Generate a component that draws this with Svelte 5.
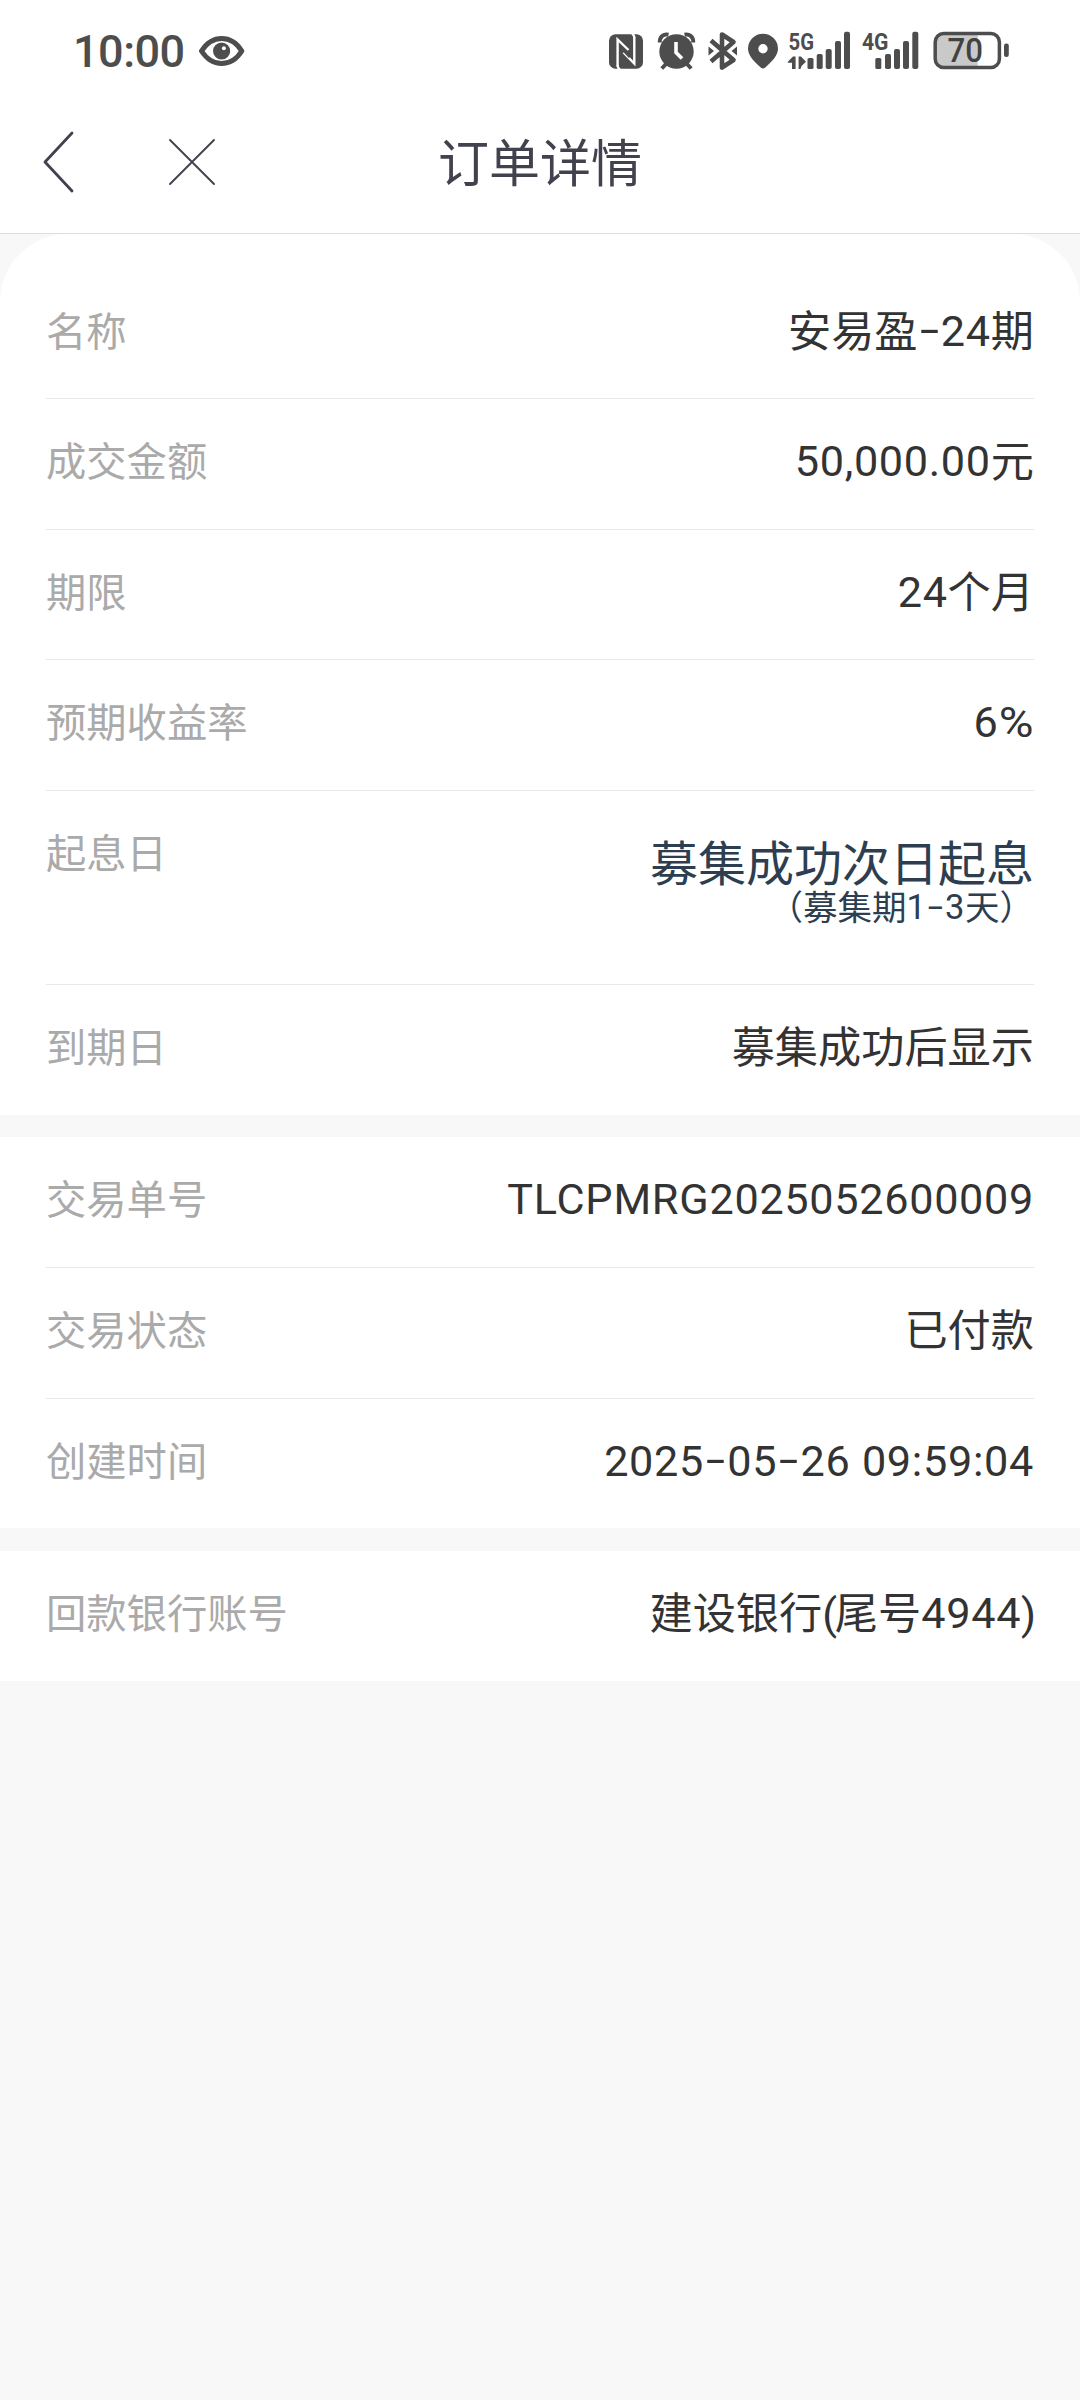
<script>
  const groups = [
    [
      { label: '名称', value: '安易盈-24期' },
      { label: '成交金额', value: '50,000.00元' },
      { label: '期限', value: '24个月' },
      { label: '预期收益率', value: '6%' },
      { label: '起息日', value: '募集成功次日起息', note: '（募集期1-3天）' },
      { label: '到期日', value: '募集成功后显示' }
    ],
    [
      { label: '交易单号', value: 'TLCPMRG2025052600009' },
      { label: '交易状态', value: '已付款' },
      { label: '创建时间', value: '2025-05-26 09:59:04' }
    ],
    [{ label: '回款银行账号', value: '建设银行(尾号4944)' }]
  ];

  const kinds = [
    [/^-/, 'dash'],
    [/^%/, 'pct'],
    [/^[()]/, 'paren'],
    [/^[A-Z]/, 'caps'],
    [/^[0-9.,: ]/, 'num']
  ];

  // Splits a string into runs of one kind of character, each with its own tracking.
  function runs(text) {
    return (text.match(/[-%()]|[A-Z]+|[0-9.,: ]+|[^-A-Z0-9.,:%() ]+/g) ?? []).map((t) => ({
      t,
      kind: kinds.find(([re]) => re.test(t))?.[1] ?? 'han'
    }));
  }
</script>

{#snippet rich(text)}{#each runs(text) as r}<span class={r.kind}>{r.t}</span>{/each}{/snippet}

<div class="screen">
  <div class="status">
    <div class="clock">
      <span class="time">10:00</span>
      <svg width="46" height="32" viewBox="199 36 46 32">
        <path d="M201.500 52C207 43.500 213.500 39.500 221.600 39.500S236.500 43.500 241.800 52C236.500 60.500 229.700 64.500 221.600 64.500S207 60.500 201.500 52Z" fill="none" stroke="#4d4d4d" stroke-width="5" stroke-linejoin="round" />
        <circle cx="221.600" cy="52" r="8.600" fill="#4d4d4d" />
        <circle cx="223.900" cy="49.300" r="2" fill="#fff" />
      </svg>
    </div>
    <div class="icons">
      <svg width="46" height="60" viewBox="604 21 46 60">
        <rect x="609" y="34.300" width="34" height="34.400" rx="6.500" fill="#4d4d4d" />
        <path d="M617.600 66.500V39.500L628.500 50M634.300 36.500V63.500L623.500 52.500" fill="none" stroke="#fff" stroke-width="2.400" />
        <path d="M632 33.500Q634.300 35 634.300 38M620 69.500Q617.600 68 617.600 65" fill="none" stroke="#fff" stroke-width="2.200" />
        <path d="M622.600 49L630 57" stroke="#4d4d4d" stroke-width="3" />
      </svg>
      <svg width="52" height="60" viewBox="650 21 52 60">
        <circle cx="676.500" cy="51.500" r="17.200" fill="#4d4d4d" />
        <path d="M659.800 42.500C659.500 36.500 663.500 33.600 668.500 34.600M693.200 42.500C693.500 36.500 689.500 33.600 684.500 34.600" fill="none" stroke="#4d4d4d" stroke-width="4" />
        <path d="M666.500 63.500L661.800 68.500M686.500 63.500L691.200 68.500" stroke="#4d4d4d" stroke-width="4" />
        <path d="M676 42V52.500L682 58.500" fill="none" stroke="#fff" stroke-width="3.600" />
      </svg>
      <svg width="41" height="60" viewBox="702 21 41 60">
        <path d="M711 40.500L733.500 60L722 67.500V34.500L733.500 42L711 61.500" fill="none" stroke="#4d4d4d" stroke-width="4.600" stroke-linejoin="round" />
        <path d="M708.500 46.500L714 51L708.500 55.500ZM737 46.500L731.500 51L737 55.500Z" fill="#4d4d4d" />
      </svg>
      <svg width="40" height="60" viewBox="743 21 40 60">
        <path fill-rule="evenodd" fill="#4d4d4d" d="M763 33.800A15 15 0 0 1 778 48.500C778 56 771.500 62 765 67.700Q763 69.300 761 67.700C754.500 62 748 56 748 48.500A15 15 0 0 1 763 33.800ZM763 44A4.700 4.700 0 1 0 763 53.400A4.700 4.700 0 0 0 763 44Z" />
      </svg>
      <svg width="75" height="60" viewBox="783 21 75 60" fill="#4d4d4d">
        <text class="net" x="788.600" y="50" textLength="25.500" lengthAdjust="spacingAndGlyphs">5G</text>
        <path d="M787.800 61.800L793 56.500H795.600V69H792V62.800H787.800ZM798.600 56.500H801L806 61.800L801.500 66L800.500 69H798.600Z" />
        <rect x="807.500" y="58" width="6" height="11" rx="1.500" />
        <rect x="816.700" y="54" width="6" height="15" rx="1.800" />
        <rect x="825.700" y="49" width="6" height="20" rx="2" />
        <rect x="835" y="41" width="6" height="28" rx="2" />
        <rect x="844" y="31.700" width="6" height="37.300" rx="2" />
      </svg>
      <svg width="70" height="60" viewBox="858 21 70 60" fill="#4d4d4d">
        <text class="net" x="862" y="50" textLength="26.500" lengthAdjust="spacingAndGlyphs">4G</text>
        <rect x="875.300" y="58" width="6" height="11" rx="1.500" />
        <rect x="885" y="54" width="6" height="15" rx="1.800" />
        <rect x="894" y="49" width="6" height="20" rx="2" />
        <rect x="903" y="41" width="6" height="28" rx="2" />
        <rect x="912.300" y="31.700" width="6" height="37.300" rx="2" />
      </svg>
      <svg width="86" height="60" viewBox="928 21 86 60">
        <path d="M977.700 34V67H943Q935.500 67 935.500 59.500V41.500Q935.500 34 943 34Z" fill="#c9c9c9" />
        <rect x="935.200" y="33.400" width="64.200" height="34" rx="8.500" fill="none" stroke="#4d4d4d" stroke-width="3.500" />
        <rect x="1004" y="43.500" width="4.800" height="13.500" rx="2.200" fill="#4d4d4d" />
        <text class="level" x="947.500" y="62.300" textLength="35.500" lengthAdjust="spacingAndGlyphs">70</text>
      </svg>
    </div>
  </div>

  <header>
    <div class="nav">
      <svg width="32" height="62" viewBox="0 0 32 62"><path d="M30 2L3 31L30 60" fill="none" stroke="#42424e" stroke-width="2.800" stroke-linecap="round" stroke-linejoin="round" /></svg>
      <svg width="48" height="48" viewBox="0 0 48 48"><path d="M2 2L46 46M46 2L2 46" fill="none" stroke="#42424e" stroke-width="1.900" stroke-linecap="round" /></svg>
    </div>
    <h1>订单详情</h1>
    <div></div>
  </header>

  <main>
    {#each groups as rows}
      <section>
        {#each rows as row}
          <div class="row" class:tall={row.note}>
            <span class="label">{row.label}</span>
            <div class="value">
              <div class="main">{@render rich(row.value)}</div>
              {#if row.note}<div class="note">{@render rich(row.note)}</div>{/if}
            </div>
          </div>
        {/each}
      </section>
    {/each}
  </main>
</div>

<style>
  :global(body) {
    background: #f8f8f8;
  }
  .screen {
    width: 1080px;
    min-height: 2400px;
    background: #f8f8f8;
    font-family: Roboto, 'Noto Sans CJK SC', sans-serif;
  }
  svg {
    display: block;
    flex: none;
  }
  .status {
    height: 102px;
    box-sizing: border-box;
    padding: 0 66px 0 73px;
    background: #fff;
    display: flex;
    align-items: center;
    justify-content: space-between;
  }
  .clock,
  .icons {
    display: flex;
    align-items: center;
  }
  .clock {
    gap: 14px;
  }
  .time {
    width: 112px;
    padding-top: 2px;
    font-size: 45px;
    line-height: 50px;
    font-weight: 500;
    letter-spacing: -0.500px;
    color: #4d4d4d;
    white-space: nowrap;
  }
  .net {
    font: 700 24px Roboto, sans-serif;
  }
  .level {
    font: 500 34px Roboto, sans-serif;
    fill: #424242;
  }
  header {
    height: 132px;
    box-sizing: border-box;
    padding: 0 42px 11px;
    border-bottom: 1px solid #dedede;
    background: #fff;
    display: grid;
    grid-template-columns: 1fr auto 1fr;
    align-items: center;
  }
  .nav {
    display: flex;
    align-items: center;
    gap: 94px;
  }
  h1 {
    margin: 0;
    padding-top: 5px;
    font-size: 51px;
    line-height: 60px;
    font-weight: 400;
    color: #42424e;
  }
  main {
    display: flex;
    flex-direction: column;
    gap: 22.800px;
  }
  section {
    background: #fff;
    padding: 0 46px;
  }
  section:first-child {
    padding-top: 34.600px;
    border-radius: 68px 68px 0 0;
  }
  .row {
    height: 130.600px;
    box-sizing: border-box;
    padding-top: 34px;
    border-bottom: 1px solid #e9e9e9;
    display: flex;
    justify-content: space-between;
  }
  .row.tall {
    height: 193.800px;
  }
  .row:last-child {
    height: 129.800px;
    border-bottom: 0;
  }
  .label {
    font-size: 40.300px;
    line-height: 60px;
    color: #aaa;
  }
  .value {
    font-size: 43.200px;
    line-height: 60px;
    color: #333;
    white-space: nowrap;
    text-align: right;
  }
  .num,
  .caps,
  .pct {
    position: relative;
    top: -1px;
  }
  .num {
    letter-spacing: 0.016em;
    white-space: pre;
  }
  .caps {
    letter-spacing: 0.018em;
  }
  .paren {
    letter-spacing: -0.050em;
  }
  .pct {
    display: inline-block;
    margin-left: 4px;
    transform: scaleX(1.100);
    transform-origin: right;
  }
  .dash {
    display: inline-block;
    width: 0.540em;
    text-align: center;
    transform: translateY(-0.060em) scaleX(1.600);
  }
  .tall .main {
    font-size: 48px;
    line-height: 60px;
    padding-top: 10px;
    color: #2c3e50;
  }
  .note {
    font-size: 34.500px;
    line-height: 34px;
    margin-top: -4px;
    color: #2c3e50;
  }
</style>
